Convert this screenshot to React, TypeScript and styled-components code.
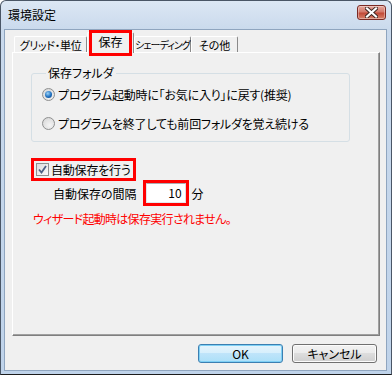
import styled, { createGlobalStyle } from "styled-components";

const GlobalStyle = createGlobalStyle`
  html, body {
    margin: 0;
    padding: 0;
    background: #ffffff;
  }
  body {
    font-family: "Noto Sans CJK JP", "Noto Sans", sans-serif;
    font-size: 12px;
    color: #000;
  }
  * {
    box-sizing: border-box;
  }
`;

const Window = styled.div`
  width: 392px;
  height: 375px;
  display: flex;
  flex-direction: column;
  border: 1px solid #4a5666;
  border-bottom-color: #1c1c1c;
  border-radius: 6px 6px 0 0;
  background: linear-gradient(#dce7f4, #c9d9ec 30px, #bfd3ea);
  padding: 0 4px 3px 3px;
`;

const TitleBar = styled.div`
  height: 28px;
  display: flex;
  justify-content: space-between;
  align-items: flex-start;
  padding: 4px 1px 0 4px;
`;

const TitleText = styled.span`
  font-size: 12px;
  line-height: 18px;
  padding-top: 1px;
  font-feature-settings: "palt";
`;

const CloseButton = styled.div`
  width: 29px;
  height: 15px;
  border: 1px solid #7b2a24;
  border-radius: 3px;
  background: linear-gradient(#e5a79c, #d47a6c 45%, #c24a38 55%, #d8836c);
  display: flex;
  align-items: center;
  justify-content: center;
  box-shadow: inset 0 0 0 1px rgba(255, 255, 255, 0.35);
`;

const Client = styled.div`
  flex: 1;
  display: flex;
  flex-direction: column;
  background: #f0f0f0;
  border: 1px solid #8fa5bf;
`;

const TabStrip = styled.div`
  height: 22px;
  display: flex;
  align-items: flex-end;
  padding-left: 9px;
`;

const Tab = styled.div<{
  $w: number;
  $active?: boolean;
  $spacing?: number;
  $size?: number;
}>`
  position: relative;
  width: ${(p) => p.$w}px;
  height: ${(p) => (p.$active ? 21 : 16)}px;
  margin-bottom: ${(p) => (p.$active ? -1 : 0)}px;
  z-index: ${(p) => (p.$active ? 2 : 1)};
  display: flex;
  justify-content: center;
  align-items: ${(p) => (p.$active ? "flex-start" : "center")};
  padding-top: ${(p) => (p.$active ? 2 : 0)}px;
  background: #f0f0f0;
  border: 1px solid #ffffff;
  border-bottom: none;
  border-right-color: #8a8a8a;
  border-radius: 2px 2px 0 0;
  font-size: ${(p) => p.$size ?? (p.$active ? 12 : 11)}px;
  letter-spacing: ${(p) => p.$spacing ?? 0}px;
  font-feature-settings: "palt";
  line-height: 14px;
  white-space: nowrap;
  ${(p) =>
    p.$active &&
    `
    &::after {
      content: "";
      position: absolute;
      top: -3px;
      bottom: -3px;
      left: 1px;
      right: 1px;
      border: 3px solid #ff0000;
    }
  `}
`;

const Panel = styled.div`
  height: 284px;
  margin: 0 6px 0 7px;
  display: flex;
  flex-direction: column;
  align-items: flex-start;
  border: 1px solid;
  border-color: #ffffff #7f7f7f #7f7f7f #ffffff;
  box-shadow: inset -1px -1px 0 #a0a0a0;
  padding: 0 0 0 18px;
`;

const GroupBox = styled.fieldset`
  width: 319px;
  margin: 13px 0 0 0;
  padding: 6px 0 10px 10px;
  border: 1px solid #d5dfe5;
  border-radius: 3px;
  display: flex;
  flex-direction: column;
  gap: 13px;
  min-inline-size: 0;
`;

const Legend = styled.legend`
  margin-left: 4px;
  padding: 0 2px;
  font-size: 12px;
  line-height: 14px;
  font-feature-settings: "palt";
`;

const Option = styled.label`
  display: flex;
  align-items: center;
  gap: 3px;
  height: 16px;
  font-feature-settings: "palt";
  letter-spacing: -0.2px;
  white-space: nowrap;
`;

const Radio = styled.span<{ $checked?: boolean }>`
  width: 13px;
  height: 13px;
  border-radius: 50%;
  border: 1px solid #8e8f8f;
  background: radial-gradient(circle at 60% 65%, #f4f4f4, #d3d3d3);
  display: flex;
  align-items: center;
  justify-content: center;
  &::after {
    content: "";
    display: ${(p) => (p.$checked ? "block" : "none")};
    width: 7px;
    height: 7px;
    border-radius: 50%;
    background: radial-gradient(circle at 40% 35%, #9bd3f7, #1f6fbf 55%, #12437a);
  }
`;

const RedBox = styled.span`
  display: inline-flex;
  align-items: center;
  border: 3px solid #ff0000;
`;

const CheckBoxFrame = styled(RedBox)`
  margin-top: 16px;
  height: 23px;
  padding: 0 2px 0 2px;
  gap: 2px;
  font-feature-settings: "palt";
  letter-spacing: -0.2px;
  white-space: nowrap;
`;

const CheckBox = styled.span`
  width: 13px;
  height: 13px;
  border: 1px solid #8e8f8f;
  background: linear-gradient(135deg, #dcdcdc, #fbfbfb);
  display: flex;
  align-items: center;
  justify-content: center;
`;

const IntervalRow = styled.div`
  display: flex;
  align-items: center;
  margin: -1px 0 0 22px;
  gap: 6px;
  font-feature-settings: "palt";
  white-space: nowrap;
`;

const InputFrame = styled(RedBox)`
  margin-right: -3px;
`;

const NumberInput = styled.div`
  width: 40px;
  height: 20px;
  background: #ffffff;
  border: 1px solid;
  border-color: #abadb3 #dbdfe6 #e3e9ef #e2e3ea;
  text-align: right;
  padding-right: 3px;
  line-height: 18px;
`;

const Notice = styled.div`
  margin: 6px 0 0 2px;
  color: #ff0000;
  line-height: 14px;
  font-feature-settings: "palt";
  letter-spacing: -0.7px;
  white-space: nowrap;
`;

const ButtonRow = styled.div`
  display: flex;
  justify-content: flex-end;
  gap: 9px;
  padding: 8px 9px 0 0;
`;

const Button = styled.div<{ $primary?: boolean }>`
  width: 85px;
  height: 19px;
  display: flex;
  align-items: center;
  justify-content: center;
  border-radius: 3px;
  font-feature-settings: "palt";
  border: 1px solid ${(p) => (p.$primary ? "#3c7fb1" : "#707070")};
  background: ${(p) =>
    p.$primary
      ? "linear-gradient(#e5f4fc, #d6effc 50%, #bfe4fa 50%, #ace0f8)"
      : "linear-gradient(#f2f2f2, #ebebeb 50%, #dddddd 50%, #cfcfcf)"};
  box-shadow: ${(p) =>
    p.$primary ? "inset 0 0 0 1px #7ed0f5" : "inset 0 0 0 1px #fcfcfc"};
`;

export default function App() {
  return (
    <>
      <GlobalStyle />
      <Window>
        <TitleBar>
          <TitleText>環境設定</TitleText>
          <CloseButton>
            <svg width="13" height="11" viewBox="0 0 13 11">
              <path
                d="M2 1.5 L11 9.5 M11 1.5 L2 9.5"
                stroke="#3a2520"
                strokeWidth="4"
                strokeLinecap="square"
              />
              <path
                d="M2 1.5 L11 9.5 M11 1.5 L2 9.5"
                stroke="#ffffff"
                strokeWidth="2.2"
                strokeLinecap="square"
              />
            </svg>
          </CloseButton>
        </TitleBar>
        <Client>
          <TabStrip>
            <Tab $w={73} $spacing={-0.3}>
              グリッド・単位
            </Tab>
            <Tab $w={47} $active>
              保存
            </Tab>
            <Tab $w={57} $size={10} $spacing={-1}>
              シェーディング
            </Tab>
            <Tab $w={47}>その他</Tab>
          </TabStrip>
          <Panel>
            <GroupBox>
              <Legend>保存フォルダ</Legend>
              <Option>
                <Radio $checked />
                プログラム起動時に「お気に入り」に戻す(推奨)
              </Option>
              <Option>
                <Radio />
                プログラムを終了しても前回フォルダを覚え続ける
              </Option>
            </GroupBox>
            <CheckBoxFrame>
              <CheckBox>
                <svg width="9" height="9" viewBox="0 0 9 9">
                  <path
                    d="M1 4.5 L3.5 7.5 L8 1"
                    fill="none"
                    stroke="#4d6185"
                    strokeWidth="1.8"
                  />
                </svg>
              </CheckBox>
              自動保存を行う
            </CheckBoxFrame>
            <IntervalRow>
              自動保存の間隔
              <InputFrame>
                <NumberInput>10</NumberInput>
              </InputFrame>
              <span>分</span>
            </IntervalRow>
            <Notice>ウィザード起動時は保存実行されません。</Notice>
          </Panel>
          <ButtonRow>
            <Button $primary>OK</Button>
            <Button>キャンセル</Button>
          </ButtonRow>
        </Client>
      </Window>
    </>
  );
}
